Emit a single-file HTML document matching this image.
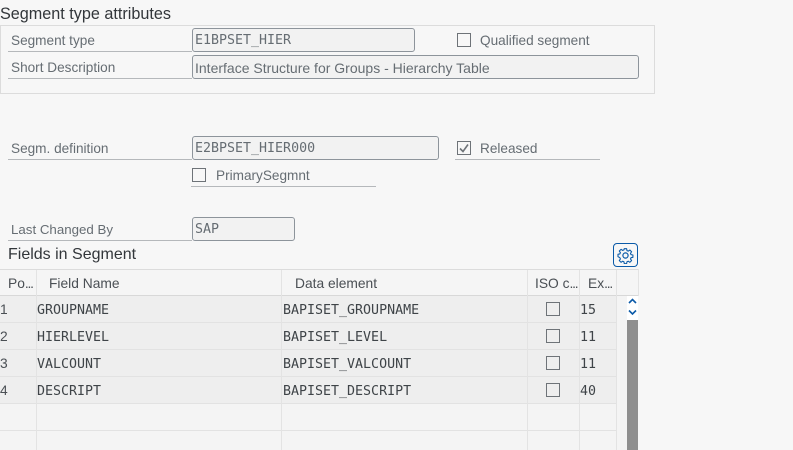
<!DOCTYPE html>
<html><head><meta charset="utf-8"><style>
html,body{margin:0;padding:0;width:793px;height:450px;overflow:hidden;background:#f7f7f7}
body{position:relative;font-family:"Liberation Sans",sans-serif}
div{position:absolute;box-sizing:border-box;white-space:nowrap}
.t{font-size:13.6px;line-height:16px;color:#666d73}
.h{font-size:16px;line-height:18px;color:#32363a}
.th{font-size:13.8px;line-height:16px;color:#4a4f54}
.th b{font-weight:normal;letter-spacing:-1.2px}
.m{font-family:"DejaVu Sans Mono",monospace;font-size:13.3px;line-height:16px;color:#666d73}
.d{font-family:"DejaVu Sans Mono",monospace;font-size:13.3px;line-height:16px;color:#3f4448}
.i{background:#f2f2f2;border:1px solid #8d949b;border-radius:3px}
.l{height:1px;background:#b5b8bb}
.c{width:14px;height:14px;border:1px solid #6e7378;background:#f7f7f7}
.v{width:1px;background:#e3e3e3}
.g{height:1px;background:#e2e2e2}
</style></head><body>
<div class="h" style="left:0;top:5px;font-size:16.2px">Segment type attributes</div>
<div style="left:0;top:25px;width:655px;height:69px;border:1px solid #dcdcdc"></div>
<div class="t" style="left:11px;top:33px">Segment type</div>
<div class="l" style="left:8px;top:51px;width:184px"></div>
<div class="i" style="left:192px;top:28px;width:223px;height:24px"></div>
<div class="m" style="left:195px;top:33px">E1BPSET_HIER</div>
<div class="c" style="left:457px;top:33px"></div>
<div class="t" style="left:480px;top:33px">Qualified segment</div>
<div class="t" style="left:11px;top:60px">Short Description</div>
<div class="l" style="left:8px;top:78px;width:184px"></div>
<div class="i" style="left:192px;top:55px;width:447px;height:24px"></div>
<div class="t" style="left:195px;top:60px;font-size:14px">Interface Structure for Groups - Hierarchy Table</div>

<div class="t" style="left:11px;top:141px">Segm. definition</div>
<div class="l" style="left:8px;top:159px;width:184px"></div>
<div class="i" style="left:192px;top:136px;width:247px;height:24px"></div>
<div class="m" style="left:195px;top:141px">E2BPSET_HIER000</div>
<div class="c" style="left:457px;top:141px"></div>
<svg style="position:absolute;left:457px;top:141px" width="14" height="14"><path d="M3 7.5L6 10.5L11 3.5" fill="none" stroke="#6e7378" stroke-width="1.6"/></svg>
<div class="t" style="left:480px;top:141px">Released</div>
<div class="l" style="left:455px;top:159px;width:145px"></div>
<div class="c" style="left:192px;top:168px"></div>
<div class="t" style="left:216px;top:168px">PrimarySegmnt</div>
<div class="l" style="left:191px;top:186px;width:185px"></div>

<div class="t" style="left:11px;top:222px;font-size:13.3px">Last Changed By</div>
<div class="l" style="left:8px;top:240px;width:184px"></div>
<div class="i" style="left:192px;top:217px;width:103px;height:24px"></div>
<div class="m" style="left:195px;top:222px">SAP</div>

<div class="h" style="left:8px;top:246px">Fields in Segment</div>
<div style="left:613px;top:243px;width:25px;height:24px;border:1px solid #0a5aa8;border-radius:4px;background:#f7f7f7"></div>
<svg style="position:absolute;left:617px;top:247px" width="17" height="17" viewBox="0 0 17 17"><path d="M7.2 1h2.6l.4 2.1 1.4.6 1.8-1.2 1.9 1.9-1.2 1.8.6 1.4 2.1.4v2.6l-2.1.4-.6 1.4 1.2 1.8-1.9 1.9-1.8-1.2-1.4.6-.4 2.1H7.2l-.4-2.1-1.4-.6-1.8 1.2-1.9-1.9 1.2-1.8-.6-1.4L.2 9.8V7.2l2.1-.4.6-1.4-1.2-1.8 1.9-1.9 1.8 1.2 1.4-.6z" transform="translate(.8 .8) scale(.9)" fill="none" stroke="#0a5aa8" stroke-width="1.2" stroke-linejoin="round"/><circle cx="8.5" cy="8.5" r="2.6" fill="none" stroke="#0a5aa8" stroke-width="1.2"/></svg>

<!-- table -->
<div style="left:0;top:269px;width:638px;height:181px;background:#f4f4f4"></div>
<div style="left:0;top:269px;width:638px;height:27px;background:#f5f5f5;border-top:1px solid #dcdcdc;border-bottom:1px solid #d8d8d8"></div>
<div style="left:0;top:296px;width:617px;height:107px;background:#eeeeee"></div>
<div class="g" style="left:0;top:322px;width:617px"></div>
<div class="g" style="left:0;top:349px;width:617px"></div>
<div class="g" style="left:0;top:376px;width:617px"></div>
<div class="g" style="left:0;top:403px;width:617px"></div>
<div class="g" style="left:0;top:430px;width:617px"></div>
<div class="v" style="left:36px;top:270px;height:180px"></div>
<div class="v" style="left:281px;top:270px;height:180px"></div>
<div class="v" style="left:527px;top:270px;height:180px"></div>
<div class="v" style="left:579px;top:270px;height:180px"></div>
<div class="v" style="left:616px;top:270px;height:180px"></div>
<div class="v" style="left:638px;top:269px;height:27px"></div>

<div class="th" style="left:8px;top:276px">Po<b>...</b></div>
<div class="th" style="left:49px;top:276px">Field Name</div>
<div class="th" style="left:295px;top:276px">Data element</div>
<div class="th" style="left:535px;top:276px">ISO c<b>...</b></div>
<div class="th" style="left:588px;top:276px">Ex<b>...</b></div>

<div class="th" style="left:0;top:302px">1</div>
<div class="th" style="left:0;top:329px">2</div>
<div class="th" style="left:0;top:356px">3</div>
<div class="th" style="left:0;top:383px">4</div>
<div class="d" style="left:37px;top:303px">GROUPNAME</div>
<div class="d" style="left:37px;top:330px">HIERLEVEL</div>
<div class="d" style="left:37px;top:357px">VALCOUNT</div>
<div class="d" style="left:37px;top:384px">DESCRIPT</div>
<div class="d" style="left:283px;top:303px">BAPISET_GROUPNAME</div>
<div class="d" style="left:283px;top:330px">BAPISET_LEVEL</div>
<div class="d" style="left:283px;top:357px">BAPISET_VALCOUNT</div>
<div class="d" style="left:283px;top:384px">BAPISET_DESCRIPT</div>
<div class="c" style="left:546px;top:302px;background:#eeeeee"></div>
<div class="c" style="left:546px;top:329px;background:#eeeeee"></div>
<div class="c" style="left:546px;top:356px;background:#eeeeee"></div>
<div class="c" style="left:546px;top:383px;background:#eeeeee"></div>
<div class="d" style="left:580px;top:303px">15</div>
<div class="d" style="left:580px;top:330px">11</div>
<div class="d" style="left:580px;top:357px">11</div>
<div class="d" style="left:580px;top:384px">40</div>

<!-- scrollbar -->
<div style="left:627px;top:296px;width:11px;height:24px;background:#ffffff"></div>
<div style="left:627px;top:320px;width:11px;height:130px;background:#8f8f8f"></div>
<svg style="position:absolute;left:627px;top:296px" width="11" height="24"><path d="M2 7L5.5 3.5L9 7M2 14.5L5.5 18L9 14.5" fill="none" stroke="#0a5aa8" stroke-width="1.6"/></svg>
</body></html>
